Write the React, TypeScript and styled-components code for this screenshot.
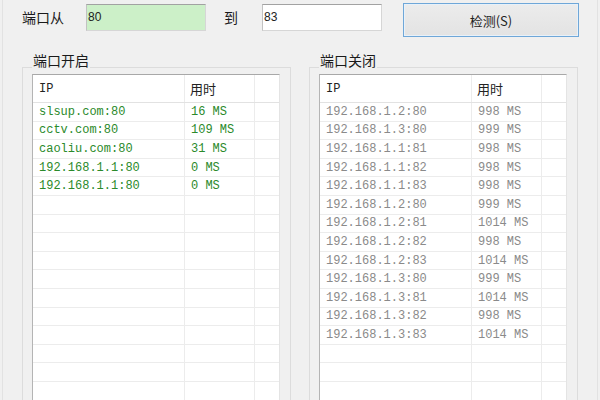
import styled, { createGlobalStyle } from 'styled-components';

const GlobalStyle = createGlobalStyle`
    html, body {
        margin: 0;
        padding: 0;
        background: #f0f0f0;
    }
    * { box-sizing: border-box; }
`;

const Window = styled.div`
    width: 596px;
    height: 400px;
    margin: 0 2px;
    overflow: hidden;
    background: #f0f0f0;
    border-left: 1px solid #e2e2e2;
    border-right: 1px solid #e2e2e2;
    font-family: "Noto Sans CJK SC", "Liberation Sans", sans-serif;
`;

const Toolbar = styled.div`
    display: flex;
    align-items: flex-start;
    height: 54px;
    padding: 3px 0 0 19px;
`;

const Label = styled.span<{ $left?: number; $right?: number }>`
    font-size: 14px;
    line-height: 28px;
    color: #1a1a1a;
    margin: 0 ${(p) => p.$right ?? 0}px 0 ${(p) => p.$left ?? 0}px;
`;

const Field = styled.div<{ $bg?: string }>`
    width: 120px;
    height: 27px;
    margin-top: 1px;
    background: ${(p) => p.$bg || '#fff'};
    border: 1px solid #d6d6d6;
    border-top-color: #a2a2a2;
    border-left-color: #c2c2c2;
    font-family: "Liberation Sans", sans-serif;
    font-size: 12px;
    line-height: 25px;
    padding-left: 1px;
    color: #222;
`;

const Button = styled.div`
    width: 176px;
    height: 34px;
    margin-left: 21px;
    border: 1px solid #6fa7d8;
    box-shadow: inset 0 0 0 1px #e8f1f9;
    background: linear-gradient(#ececec, #e3e3e3);
    display: flex;
    align-items: center;
    justify-content: center;
    font-size: 13px;
    color: #222;
`;

const Panels = styled.div`
    display: flex;
    gap: 18px;
    padding-left: 19px;
    margin-top: 13px;
`;

const Group = styled.div`
    position: relative;
    width: 269px;
    height: 340px;
    border: 1px solid #dcdcdc;
    padding: 6px 10px 0 9px;
`;

const Caption = styled.span`
    position: absolute;
    top: -16px;
    left: 9px;
    padding: 0 1px;
    background: #f0f0f0;
    font-size: 14px;
    line-height: 16px;
    color: #1a1a1a;
`;

const List = styled.div`
    background: #fff;
    height: 100%;
    border-top: 1px solid #a8a8a8;
    border-left: 1px solid #b4b4b4;
    border-right: 1px solid #e4e4e4;
`;

const Row = styled.div<{ $head?: boolean }>`
    display: grid;
    grid-template-columns: 152px 70px 1fr;
    height: ${(p) => (p.$head ? '28px' : '18.6px')};
    border-bottom: 1px solid ${(p) => (p.$head ? '#e2e2e2' : '#ececec')};
`;

const Cell = styled.div<{ $color?: string; $cjk?: boolean }>`
    border-right: 1px solid #ececec;
    padding-left: ${(p) => (p.$cjk ? 5 : 6)}px;
    display: flex;
    align-items: center;
    font-family: ${(p) =>
        p.$cjk
            ? '"Noto Sans CJK SC", sans-serif'
            : '"Liberation Mono", "Noto Sans CJK SC", monospace'};
    font-size: ${(p) => (p.$cjk ? 13 : 12)}px;
    color: ${(p) => p.$color || '#222'};
    white-space: nowrap;
    &:last-child { border-right: none; }
`;

type Entry = { ip: string; ms: number };

const openPorts: Entry[] = [
    { ip: 'slsup.com:80', ms: 16 },
    { ip: 'cctv.com:80', ms: 109 },
    { ip: 'caoliu.com:80', ms: 31 },
    { ip: '192.168.1.1:80', ms: 0 },
    { ip: '192.168.1.1:80', ms: 0 },
];

const closedPorts: Entry[] = [
    { ip: '192.168.1.2:80', ms: 998 },
    { ip: '192.168.1.3:80', ms: 999 },
    { ip: '192.168.1.1:81', ms: 998 },
    { ip: '192.168.1.1:82', ms: 998 },
    { ip: '192.168.1.1:83', ms: 998 },
    { ip: '192.168.1.2:80', ms: 999 },
    { ip: '192.168.1.2:81', ms: 1014 },
    { ip: '192.168.1.2:82', ms: 998 },
    { ip: '192.168.1.2:83', ms: 1014 },
    { ip: '192.168.1.3:80', ms: 999 },
    { ip: '192.168.1.3:81', ms: 1014 },
    { ip: '192.168.1.3:82', ms: 998 },
    { ip: '192.168.1.3:83', ms: 1014 },
];

// строк в списке вместе с пустыми
const ROWS = 17;

const PortList = ({ items, color }: { items: Entry[]; color: string }) => {
    const blanks = Math.max(0, ROWS - items.length);
    return (
        <List>
            <Row $head>
                <Cell>IP</Cell>
                <Cell $cjk>用时</Cell>
                <Cell />
            </Row>
            {items.map((e, i) => (
                <Row key={i}>
                    <Cell $color={color}>{e.ip}</Cell>
                    <Cell $color={color}>{e.ms} MS</Cell>
                    <Cell />
                </Row>
            ))}
            {Array.from({ length: blanks }).map((_, i) => (
                <Row key={'b' + i}>
                    <Cell />
                    <Cell />
                    <Cell />
                </Row>
            ))}
        </List>
    );
};

const App = () => {
    return (
        <>
            <GlobalStyle />
            <Window>
                <Toolbar>
                    <Label $right={22}>端口从</Label>
                    <Field $bg="#ccf0c8">80</Field>
                    <Label $left={18} $right={24}>到</Label>
                    <Field>83</Field>
                    <Button>检测(S)</Button>
                </Toolbar>
                <Panels>
                    <Group>
                        <Caption>端口开启</Caption>
                        <PortList items={openPorts} color="#2b8a2b" />
                    </Group>
                    <Group>
                        <Caption>端口关闭</Caption>
                        <PortList items={closedPorts} color="#8a8a8a" />
                    </Group>
                </Panels>
            </Window>
        </>
    );
};

export default App;
